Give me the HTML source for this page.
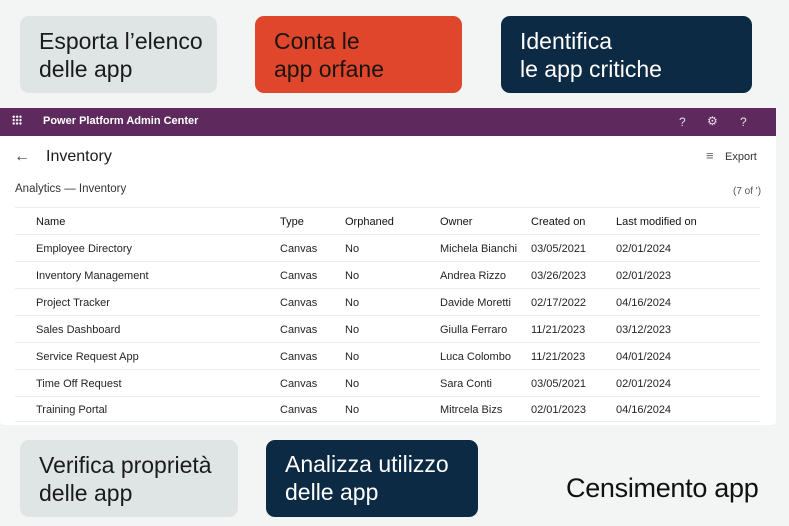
<!DOCTYPE html>
<html><head><meta charset="utf-8"><style>
*{margin:0;padding:0;box-sizing:border-box}
body{width:789px;height:526px;background:#f3f4f4;position:relative;overflow:hidden;font-family:"Liberation Sans",sans-serif;color:#1b1b1b}
.a{position:absolute;white-space:nowrap}
.box{position:absolute;border-radius:9px;padding:11px 0 0 19px;font-size:23px;line-height:28px}
.t{position:absolute;font-size:11px;color:#242424;white-space:nowrap;top:0}
.ln{position:absolute;left:15px;width:745px;height:1px;background:#ececec}
</style></head><body>
<div class="box" style="left:20px;top:16px;width:197px;height:77px;background:#dfe4e5">Esporta l’elenco<br>delle app</div>
<div class="box" style="left:255px;top:16px;width:207px;height:77px;background:#e0462b;color:#1a1410">Conta le<br>app orfane</div>
<div class="box" style="left:501px;top:16px;width:251px;height:77px;background:#0c2a43;color:#fff">Identifica<br>le app critiche</div>

<div class="a" style="left:0;top:108px;width:776px;height:28px;background:#5e2a5e"></div>
<div class="a" style="left:12px;top:115px;width:10px;height:10px;background:radial-gradient(circle,#fff 1px,transparent 1.3px) 0 0/3.4px 3.4px"></div>
<div class="a" style="left:43px;top:115px;font-size:11px;color:#fff;font-weight:bold">Power Platform Admin Center</div>
<div class="a" style="left:679px;top:115px;font-size:12px;color:#e8dce8">?</div>
<div class="a" style="left:707px;top:114px;font-size:12px;color:#e8dce8">⚙</div>
<div class="a" style="left:740px;top:115px;font-size:12px;color:#e8dce8">?</div>

<div class="a" style="left:0;top:136px;width:776px;height:289px;background:#fff;border-radius:0 0 4px 4px"></div>
<div class="a" style="left:14px;top:148px;font-size:16px;color:#444">←</div>
<div class="a" style="left:46px;top:148px;font-size:16px;color:#1b1b1b">Inventory</div>
<div class="a" style="left:706px;top:148px;font-size:13px;color:#666">≡</div>
<div class="a" style="left:725px;top:151px;font-size:11px;color:#333">Export</div>
<div class="a" style="left:15px;top:183px;font-size:11.5px;color:#333">Analytics — Inventory</div>
<div class="a" style="left:733px;top:186px;font-size:10px;color:#555">(7 of ')</div>
<div class="ln" style="top:207px"></div>

<div style="position:absolute;left:0;top:216px;color:#111">
<div class="t" style="left:36px;color:#111">Name</div>
<div class="t" style="left:280px;color:#111">Type</div>
<div class="t" style="left:345px;color:#111">Orphaned</div>
<div class="t" style="left:440px;color:#111">Owner</div>
<div class="t" style="left:531px;color:#111">Created on</div>
<div class="t" style="left:616px;color:#111">Last modified on</div>
</div>
<div class="ln" style="top:234px"></div>

<div style="position:absolute;left:0;top:243px"><div class="t" style="left:36px">Employee Directory</div><div class="t" style="left:280px">Canvas</div><div class="t" style="left:345px">No</div><div class="t" style="left:440px">Michela Bianchi</div><div class="t" style="left:531px">03/05/2021</div><div class="t" style="left:616px">02/01/2024</div></div>
<div class="ln" style="top:261px"></div>
<div style="position:absolute;left:0;top:270px"><div class="t" style="left:36px">Inventory Management</div><div class="t" style="left:280px">Canvas</div><div class="t" style="left:345px">No</div><div class="t" style="left:440px">Andrea Rizzo</div><div class="t" style="left:531px">03/26/2023</div><div class="t" style="left:616px">02/01/2023</div></div>
<div class="ln" style="top:288px"></div>
<div style="position:absolute;left:0;top:297px"><div class="t" style="left:36px">Project Tracker</div><div class="t" style="left:280px">Canvas</div><div class="t" style="left:345px">No</div><div class="t" style="left:440px">Davide Moretti</div><div class="t" style="left:531px">02/17/2022</div><div class="t" style="left:616px">04/16/2024</div></div>
<div class="ln" style="top:315px"></div>
<div style="position:absolute;left:0;top:324px"><div class="t" style="left:36px">Sales Dashboard</div><div class="t" style="left:280px">Canvas</div><div class="t" style="left:345px">No</div><div class="t" style="left:440px">Giulla Ferraro</div><div class="t" style="left:531px">11/21/2023</div><div class="t" style="left:616px">03/12/2023</div></div>
<div class="ln" style="top:342px"></div>
<div style="position:absolute;left:0;top:351px"><div class="t" style="left:36px">Service Request App</div><div class="t" style="left:280px">Canvas</div><div class="t" style="left:345px">No</div><div class="t" style="left:440px">Luca Colombo</div><div class="t" style="left:531px">11/21/2023</div><div class="t" style="left:616px">04/01/2024</div></div>
<div class="ln" style="top:369px"></div>
<div style="position:absolute;left:0;top:378px"><div class="t" style="left:36px">Time Off Request</div><div class="t" style="left:280px">Canvas</div><div class="t" style="left:345px">No</div><div class="t" style="left:440px">Sara Conti</div><div class="t" style="left:531px">03/05/2021</div><div class="t" style="left:616px">02/01/2024</div></div>
<div class="ln" style="top:396px"></div>
<div style="position:absolute;left:0;top:404px"><div class="t" style="left:36px">Training Portal</div><div class="t" style="left:280px">Canvas</div><div class="t" style="left:345px">No</div><div class="t" style="left:440px">Mitrcela Bizs</div><div class="t" style="left:531px">02/01/2023</div><div class="t" style="left:616px">04/16/2024</div></div>
<div class="ln" style="top:421px"></div>

<div class="box" style="left:20px;top:440px;width:218px;height:77px;background:#dfe4e5">Verifica proprietà<br>delle app</div>
<div class="box" style="left:266px;top:440px;width:212px;height:77px;background:#0c2a43;color:#fff;padding-top:10px">Analizza utilizzo<br>delle app</div>
<div class="a" style="left:566px;top:473px;font-size:27px;color:#111;letter-spacing:-0.3px">Censimento app</div>
</body></html>
